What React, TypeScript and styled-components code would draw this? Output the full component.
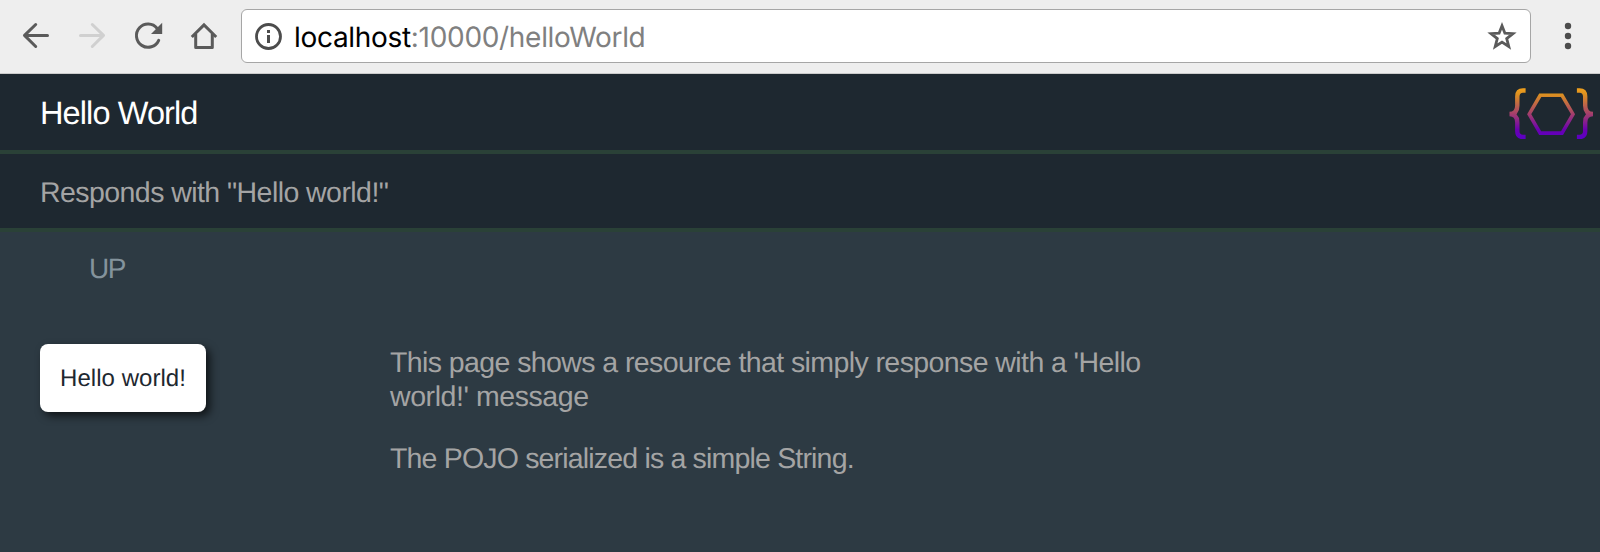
import React from "react";
import styled, { createGlobalStyle } from "styled-components";

const GlobalStyle = createGlobalStyle`
  * { box-sizing: border-box; }
  html, body, #root { height: 100%; }
  body {
    margin: 0;
    overflow: hidden;
    background: #2d3a43;
    font-family: "Liberation Sans", Arial, sans-serif;
    text-rendering: geometricPrecision;
  }
`;

const Window = styled.div`
  display: flex;
  flex-direction: column;
  height: 552px;
`;

const Toolbar = styled.div`
  display: flex;
  align-items: flex-start;
  flex: none;
  height: 74px;
  padding: 9px 0 0 20px;
  background: #eeeeee;
  border-bottom: 1px solid #cbcbcb;
`;

const NavButton = styled.button<{ $disabled?: boolean }>`
  display: flex;
  align-items: center;
  justify-content: center;
  width: 32px;
  height: 54px;
  margin-right: 24px;
  padding: 0;
  border: 0;
  background: none;
  color: ${(p) => (p.$disabled ? "#d0d0d0" : "#5a5a5a")};
`;

const AddressBar = styled.div`
  display: flex;
  align-items: center;
  width: 1290px;
  height: 54px;
  margin-left: -3px;
  padding: 0 12px 0 11px;
  background: #ffffff;
  border: 1px solid #a6a6a6;
  border-radius: 6px;
`;

const Address = styled.div`
  flex: 1;
  margin-left: 11px;
  padding-top: 1px;
  font-family: Inter, Roboto, sans-serif;
  font-size: 28px;
  line-height: 34px;
  letter-spacing: -0.31px;
  color: #808080;
  white-space: nowrap;
`;

const Host = styled.span`
  color: #000000;
`;

const MenuButton = styled(NavButton)`
  margin: 0 0 0 21px;
`;

const Band = styled.header<{ $height: number }>`
  display: flex;
  align-items: center;
  justify-content: space-between;
  flex: none;
  height: ${(p) => p.$height}px;
  padding: 0 6px 0 40px;
  background: #1e2830;
  border-bottom: 4px solid #2a4137;
`;

const Title = styled.h1`
  margin: 2px 0 0;
  font-size: 32.5px;
  font-weight: 400;
  line-height: 38px;
  letter-spacing: -0.9px;
  color: #ffffff;
`;

const Summary = styled.p`
  margin: 3px 0 0;
  font-size: 28.5px;
  line-height: 34px;
  letter-spacing: -0.56px;
  color: #a4a4a4;
`;

const Page = styled.main`
  flex: 1;
  background: #2d3a43;
`;

const UpLink = styled.a`
  display: block;
  width: max-content;
  margin: 20px 0 0 89px;
  font-size: 28px;
  line-height: 34px;
  letter-spacing: -1.4px;
  color: #84939c;
`;

const Content = styled.section`
  display: flex;
  align-items: flex-start;
  margin: 58px 0 0 40px;
`;

const ResourceColumn = styled.div`
  width: 350px;
`;

const Card = styled.div`
  display: flex;
  align-items: center;
  width: 166px;
  height: 68px;
  padding: 1px 0 0 20px;
  border-radius: 8px;
  background: #ffffff;
  box-shadow: 4px 4px 8px rgba(0, 0, 0, 0.65);
  font-size: 24px;
  line-height: 28px;
  letter-spacing: 0.05px;
  color: #1e2830;
`;

const Description = styled.div`
  width: 780px;
  padding-top: 2px;
`;

const Paragraph = styled.p`
  margin: 0 0 28px;
  font-size: 28.5px;
  line-height: 34px;
  color: #a4a4a4;
`;

const Line = styled.span<{ $tracking: number }>`
  display: block;
  white-space: nowrap;
  letter-spacing: ${(p) => p.$tracking}px;
`;

const Logo = () => (
  <svg width="86" height="54" viewBox="1508 85.5 86 54" fill="none">
    <defs>
      <linearGradient id="flame" gradientUnits="userSpaceOnUse" x1="0" y1="89" x2="0" y2="139">
        <stop offset="0" stopColor="#f0a01c" />
        <stop offset="0.12" stopColor="#dc9020" />
        <stop offset="0.5" stopColor="#a5406a" />
        <stop offset="0.82" stopColor="#6b00b0" />
        <stop offset="1" stopColor="#5b00c4" />
      </linearGradient>
    </defs>
    <g stroke="url(#flame)">
      <path strokeWidth="4.4" d="M1525.6 91H1523Q1517.3 91 1517.3 97V106Q1517.3 114.5 1509.5 114.5Q1517.3 114.5 1517.3 123V131.5Q1517.3 137.5 1523 137.5H1525.6" />
      <path strokeWidth="4.4" d="M1576.9 91H1579.5Q1585.2 91 1585.2 97V106Q1585.2 114.5 1593 114.5Q1585.2 114.5 1585.2 123V131.5Q1585.2 137.5 1579.5 137.5H1576.9" />
      <path strokeWidth="3.6" d="M1540.2 95.8H1562L1573 114.7L1562 133.6H1540.2L1529.2 114.7Z" />
    </g>
  </svg>
);

export default function App() {
  return (
    <Window>
      <GlobalStyle />
      <Toolbar>
        <NavButton aria-label="Back">
          <svg width="32" height="32" viewBox="20 20 32 32" fill="none" stroke="currentColor" strokeWidth="3" strokeLinecap="round" strokeLinejoin="round">
            <path d="M47.5 35.4H25M35.7 24.5L24.5 35.4L35.7 46.5" />
          </svg>
        </NavButton>
        <NavButton aria-label="Forward" $disabled>
          <svg width="32" height="32" viewBox="76 20 32 32" fill="none" stroke="currentColor" strokeWidth="3" strokeLinecap="round" strokeLinejoin="round">
            <path d="M80.500 35.400H103M92.300 24.500L103.500 35.400L92.300 46.500" />
          </svg>
        </NavButton>
        <NavButton aria-label="Reload">
          <svg width="32" height="32" viewBox="132 20 32 32" fill="none">
            <path stroke="currentColor" strokeWidth="3" strokeLinecap="round" d="M157.200 28.500A11.600 11.600 0 1 0 158.700 40.300" />
            <path fill="currentColor" d="M162.200 22.800V34H151Z" />
          </svg>
        </NavButton>
        <NavButton aria-label="Home">
          <svg width="32" height="32" viewBox="188 20 32 32" fill="none" stroke="currentColor" strokeWidth="3">
            <path strokeLinejoin="round" d="M195.700 34V47.400H212.300V34" />
            <path d="M191.800 37L204 24.900L216.200 37" />
          </svg>
        </NavButton>
        <AddressBar>
          <svg width="30" height="30" viewBox="253 21 30 30" fill="none">
            <circle cx="268.500" cy="36.500" r="12" stroke="#4c4c4c" strokeWidth="2.800" />
            <path fill="#4c4c4c" d="M267 30h3v3h-3zM267 35h3v8h-3z" />
          </svg>
          <Address>
            <Host>localhost</Host>:10000/helloWorld
          </Address>
          <svg width="32" height="32" viewBox="1486 20 32 32" fill="none">
            <path stroke="#5a5a5a" strokeWidth="2.800" d="M1502 25.800L1504.900 33.200L1512.900 33.700L1506.700 38.600L1508.800 46.500L1502 42.100L1495.200 46.500L1497.300 38.600L1491.100 33.700L1499.100 33.200Z" />
          </svg>
        </AddressBar>
        <MenuButton aria-label="Menu">
          <svg width="32" height="32" viewBox="1552 20 32 32" fill="#4c4c4c">
            <circle cx="1568" cy="26" r="3.200" />
            <circle cx="1568" cy="36" r="3.200" />
            <circle cx="1568" cy="46" r="3.200" />
          </svg>
        </MenuButton>
      </Toolbar>
      <Band $height={80}>
        <Title>Hello World</Title>
        <Logo />
      </Band>
      <Band as="div" $height={78}>
        <Summary>Responds with "Hello world!"</Summary>
      </Band>
      <Page>
        <UpLink>UP</UpLink>
        <Content>
          <ResourceColumn>
            <Card>Hello world!</Card>
          </ResourceColumn>
          <Description>
            <Paragraph>
              <Line $tracking={-0.59}>This page shows a resource that simply response with a 'Hello</Line>
              <Line $tracking={-0.43}>world!' message</Line>
            </Paragraph>
            <Paragraph>
              <Line $tracking={-0.82}>The POJO serialized is a simple String.</Line>
            </Paragraph>
          </Description>
        </Content>
      </Page>
    </Window>
  );
}
